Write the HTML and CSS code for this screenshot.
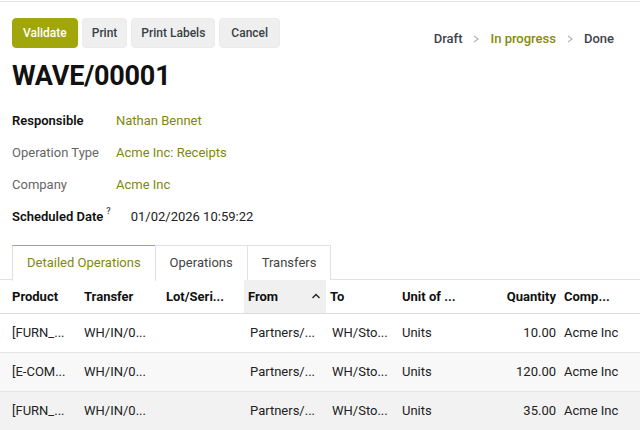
FILE: index.html
```html
<!DOCTYPE html>
<html>
<head>
<meta charset="utf-8">
<link rel="stylesheet" href="styles.css">
</head>
<body>
<div class="topline"></div>
<div class="sheet">
  <div class="header">
    <div class="buttons">
      <button class="btn btn-primary">Validate</button>
      <button class="btn">Print</button>
      <button class="btn">Print Labels</button>
      <button class="btn btn-cancel">Cancel</button>
    </div>
    <div class="status">
      <span class="st">Draft</span>
      <svg class="chev" width="8" height="10" viewBox="0 0 8 10"><polyline points="2,2 6,5 2,8" fill="none" stroke="#b4b9be" stroke-width="1.3"/></svg>
      <span class="st active">In progress</span>
      <svg class="chev" width="8" height="10" viewBox="0 0 8 10"><polyline points="2,2 6,5 2,8" fill="none" stroke="#b4b9be" stroke-width="1.3"/></svg>
      <span class="st">Done</span>
    </div>
  </div>
  <h1 class="title">WAVE/00001</h1>
  <div class="fields">
    <div class="field"><span class="label strong">Responsible</span><span class="value link">Nathan Bennet</span></div>
    <div class="field"><span class="label">Operation Type</span><span class="value link">Acme Inc: Receipts</span></div>
    <div class="field"><span class="label">Company</span><span class="value link">Acme Inc</span></div>
    <div class="field"><span class="label strong">Scheduled Date<sup class="help">?</sup></span><span class="value">01/02/2026 10:59:22</span></div>
  </div>
  <div class="tabs">
    <div class="tab active">Detailed Operations</div>
    <div class="tab">Operations</div>
    <div class="tab">Transfers</div>
  </div>
</div>
<table class="grid">
  <colgroup>
    <col style="width:80px"><col style="width:82px"><col style="width:82px"><col style="width:82px"><col style="width:72px"><col style="width:82px"><col style="width:80px"><col style="width:80px">
  </colgroup>
  <thead>
    <tr>
      <th class="first">Product</th>
      <th>Transfer</th>
      <th>Lot/Seri...</th>
      <th class="sorted"><span class="sortwrap">From<svg class="caret" width="10" height="8" viewBox="0 0 10 8"><polyline points="1.5,6 5,2.5 8.5,6" fill="none" stroke="#222" stroke-width="1.4"/></svg></span></th>
      <th>To</th>
      <th>Unit of ...</th>
      <th class="num">Quantity</th>
      <th>Comp...</th>
    </tr>
  </thead>
  <tbody>
    <tr>
      <td class="first">[FURN_...</td><td>WH/IN/0...</td><td></td><td class="from">Partners/...</td><td class="to">WH/Sto...</td><td>Units</td><td class="num">10.00</td><td>Acme Inc</td>
    </tr>
    <tr class="odd">
      <td class="first">[E-COM...</td><td>WH/IN/0...</td><td></td><td class="from">Partners/...</td><td class="to">WH/Sto...</td><td>Units</td><td class="num">120.00</td><td>Acme Inc</td>
    </tr>
    <tr class="hover">
      <td class="first">[FURN_...</td><td>WH/IN/0...</td><td></td><td class="from">Partners/...</td><td class="to">WH/Sto...</td><td>Units</td><td class="num">35.00</td><td>Acme Inc</td>
    </tr>
  </tbody>
</table>
</body>
</html>
```

FILE: styles.css
```css
* { box-sizing: border-box; }
html, body { margin: 0; padding: 0; background: #fff; }
body {
  font-family: Roboto, "Liberation Sans", sans-serif;
  font-size: 13px;
  color: #222;
  width: 640px;
  overflow: hidden;
}
.topline { height: 2px; border-bottom: 1px solid #e4e4e4; }
.sheet { padding: 0 0 0 12px; }
.header {
  display: flex;
  justify-content: space-between;
  align-items: flex-start;
  padding-top: 16px;
}
.buttons { display: flex; gap: 4px; }
.btn {
  font-family: inherit;
  font-size: 12px;
  font-weight: 500;
  height: 30px;
  padding: 0 9px;
  border: 1px solid #ebebeb;
  border-radius: 4px;
  background: #efefef;
  color: #3a3f46;
  cursor: pointer;
}
.btn-primary {
  background: #a1a60b;
  border-color: #a1a60b;
  color: #fff;
  padding: 0 10px;
}
.btn-cancel { padding: 0 11px; }
.status {
  display: flex;
  align-items: center;
  gap: 6px;
  margin-top: 13px;
  padding-right: 26px;
  font-size: 13px;
  font-weight: 500;
  color: #3e444b;
}
.status .st.active { color: #868b0a; }
.chev { margin: 0 4px; }
.title {
  font-size: 27px;
  font-weight: 700;
  color: #111;
  margin: 12px 0 0 0;
  line-height: 32px;
  letter-spacing: -0.2px;
}
.fields { margin-top: 12px; }
.field { display: flex; height: 32px; align-items: center; }
.label {
  min-width: 104px;
  padding-right: 14px;
  color: #666;
  white-space: nowrap;
}
.label.strong { color: #111; font-weight: 600; }
.help { font-size: 9px; color: #555; font-weight: 600; margin-left: 3px; margin-right: 6px; position: relative; top: -2px; }
.value { color: #222; }
.value.link { color: #7f880c; }
.tabs {
  display: flex;
  margin-top: 13px;
  margin-left: -12px;
  padding-left: 12px;
  border-bottom: 1px solid #dee2e6;
  height: 35px;
}
.tab {
  height: 35px;
  line-height: 34px;
  padding: 0 14px;
  color: #444;
  border: 1px solid #dee2e6;
  border-bottom: none;
  margin-right: -1px;
  background: #fff;
}
.tab.active {
  color: #808a0c;
  border-top: 1px solid #a3a96a;
  height: 36px;
  margin-bottom: -1px;
  padding: 0 14px;
}
.grid {
  width: 640px;
  table-layout: fixed;
  border-collapse: collapse;
}
.grid th, .grid td {
  padding: 0 4px;
  text-align: left;
  white-space: nowrap;
  overflow: hidden;
}
.grid th {
  height: 33px;
  font-weight: 700;
  color: #111;
  border-bottom: 1px solid #dcdcdc;
}
.grid td {
  height: 39px;
  color: #222;
  border-bottom: 1px solid #e6e6e6;
}
.grid .first { padding-left: 12px; }
.grid .num { text-align: right; }
.grid td.to { padding-left: 6px; }
.grid td.from { padding-left: 6px; }
.grid th.sorted { background: #f0f0f0; }
.sortwrap { display: flex; justify-content: space-between; align-items: center; }
.caret { margin-right: 1px; }
.grid tr.odd td { background: #f8f8f8; }
.grid tr.hover td { background: #f2f2f2; }
```
